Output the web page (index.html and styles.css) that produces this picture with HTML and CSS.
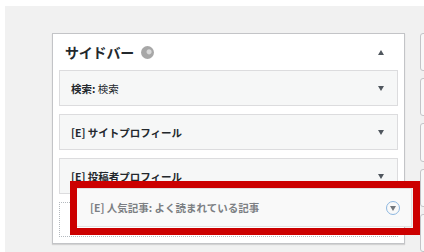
FILE: index.html
```html
<!DOCTYPE html>
<html lang="ja">
<head>
<meta charset="UTF-8">
<meta name="viewport" content="width=device-width, initial-scale=1.0">
<title>ウィジェット</title>
<link rel="stylesheet" href="styles.css">
</head>
<body>
<div class="screen">
  <div class="sidebar">
    <div class="sidebar-head">
      <h2 class="sidebar-title">サイドバー <span class="spinner"></span></h2>
      <span class="arrow arrow-up"></span>
    </div>
    <div class="widget-list">
      <div class="widget">
        <span class="widget-title">検索: <span class="widget-sub">検索</span></span>
        <span class="arrow"></span>
      </div>
      <div class="widget">
        <span class="widget-title">[E] サイトプロフィール</span>
        <span class="arrow"></span>
      </div>
      <div class="widget">
        <span class="widget-title">[E] 投稿者プロフィール</span>
        <span class="arrow"></span>
      </div>
      <div class="placeholder"></div>
    </div>

    <div class="widget widget-drag">
      <span class="widget-title">[E] 人気記事: よく読まれている記事</span>
      <span class="arrow-circle"><span class="arrow"></span></span>
    </div>
    <div class="highlight"></div>
  </div>

  <div class="side-col">
    <div class="side-box"></div>
    <div class="side-box"></div>
    <div class="side-box"></div>
    <div class="side-box"></div>
    <div class="side-box"></div>
  </div>
</div>
</body>
</html>
```

FILE: styles.css
```css
html, body {
  margin: 0;
  background: #fff;
  overflow: hidden;
}

body {
  font-family: "Noto Sans CJK JP", "Noto Sans", sans-serif;
  color: #23282d;
}

.screen {
  margin: 6px 0 0 5px;
  height: 246px;
  background: #f1f1f1;
  display: flex;
  gap: 15px;
  padding: 27px 0 0 47px;
  box-sizing: border-box;
  overflow: hidden;
}

.sidebar {
  position: relative;
  flex: 0 0 353px;
  height: 211px;
  background: #fff;
  border: 1px solid #c3c4c7;
  box-shadow: 0 1px 1px rgba(0, 0, 0, 0.12);
  box-sizing: border-box;
}

.sidebar-head {
  display: flex;
  align-items: center;
  justify-content: space-between;
  height: 36px;
  padding: 0 20px 0 12px;
}

.sidebar-title {
  margin: 0;
  font-size: 14px;
  font-weight: bold;
  display: flex;
  align-items: center;
  gap: 7px;
  letter-spacing: -0.2px;
}

.spinner {
  display: inline-block;
  width: 13px;
  height: 13px;
  border-radius: 50%;
  background: radial-gradient(circle at 62% 45%, #d8d8d8 0, #d8d8d8 2px, #a7a7a7 3px);
}

.arrow {
  width: 0;
  height: 0;
  border-left: 3.5px solid transparent;
  border-right: 3.5px solid transparent;
  border-top: 5px solid #50575e;
}

.arrow-up {
  border-top: 0;
  border-bottom: 5px solid #50575e;
}

.widget-list {
  display: flex;
  flex-direction: column;
  gap: 8px;
  padding: 0 6px;
}

.widget {
  display: flex;
  align-items: center;
  justify-content: space-between;
  height: 36px;
  padding: 0 13px 0 11px;
  background: #f6f7f7;
  border: 1px solid #dcdcde;
  box-sizing: border-box;
}

.widget-title {
  font-size: 10.5px;
  font-weight: bold;
}

.widget-sub {
  font-weight: normal;
}

.placeholder {
  height: 35px;
  border: 1px dotted #b4b9be;
  box-sizing: border-box;
}

.widget-drag {
  position: absolute;
  left: 23px;
  top: 154px;
  width: 336px;
  height: 39px;
  background: #f9f9f9;
  border-color: #e2e2e2;
  padding-right: 11px;
}

.widget-drag .widget-title {
  color: #7c7f83;
  padding-left: 2px;
}

.arrow-circle {
  width: 14px;
  height: 14px;
  border: 1px solid #8db7e0;
  border-radius: 50%;
  display: flex;
  align-items: center;
  justify-content: center;
  padding-top: 1px;
  box-sizing: border-box;
}

.arrow-circle .arrow {
  border-top-color: #72777c;
}

.highlight {
  position: absolute;
  left: 17px;
  top: 147px;
  width: 350px;
  height: 54px;
  border: 7px solid #cc0000;
  box-sizing: border-box;
}

.side-col {
  display: flex;
  flex-direction: column;
  gap: 7px;
  flex: 0 0 20px;
}

.side-box {
  height: 40px;
  background: #f8f8f8;
  border: 1px solid #c3c4c7;
  border-radius: 3px;
  box-sizing: border-box;
}
```
